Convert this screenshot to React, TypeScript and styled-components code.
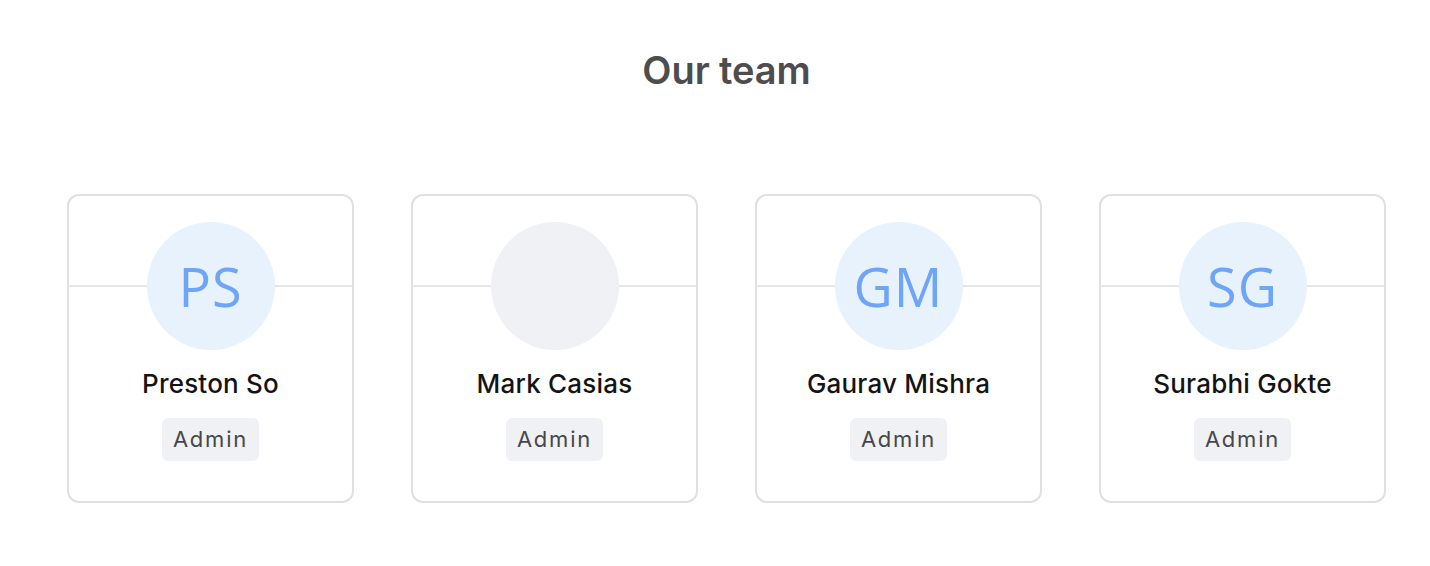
import React, { FC } from 'react';
import styled, { createGlobalStyle } from 'styled-components';

const GlobalStyle = createGlobalStyle`
    body {
        margin: 0;
        background: #ffffff;
        font-family: Inter, "Noto Sans", sans-serif;
    }
`;

const Section = styled.section`
    padding: 42px 44px 0 67px;
`;

const Title = styled.h2`
    margin: 0;
    text-align: center;
    font-size: 38px;
    line-height: 56px;
    font-weight: 600;
    color: #4d4d4d;
    letter-spacing: -0.1px;
`;

const TeamGrid = styled.ul`
    list-style: none;
    margin: 96px 0 0;
    padding: 0;
    display: grid;
    grid-template-columns: repeat(4, 1fr);
    gap: 57px;
`;

const Card = styled.li`
    border: 2px solid #e0e0e2;
    border-radius: 12px;
    padding: 26px 0 40px;
    display: flex;
    flex-direction: column;
    align-items: center;
`;

const AvatarRow = styled.div`
    align-self: stretch;
    display: flex;
    align-items: center;

    &::before,
    &::after {
        content: '';
        flex: 1;
        height: 2px;
        background: #e6e6ea;
    }
`;

const Avatar = styled.div<{ $empty?: boolean }>`
    width: 128px;
    height: 128px;
    border-radius: 50%;
    background: ${(p) => (p.$empty ? '#eff1f4' : '#e7f2fd')};
    color: #6ea5f6;
    display: flex;
    align-items: center;
    justify-content: center;
    font-family: "Open Sans", "Noto Sans", sans-serif;
    font-size: 54px;
    letter-spacing: 1px;
`;

const Name = styled.div`
    margin-top: 18px;
    font-size: 26px;
    line-height: 32px;
    font-weight: 500;
    color: #141414;
    letter-spacing: 0.2px;
`;

const Role = styled.span`
    margin-top: 18px;
    background: #f0f1f5;
    border-radius: 6px;
    padding: 0 11px;
    line-height: 43px;
    font-size: 22px;
    letter-spacing: 1.8px;
    color: #474747;
`;

interface IMember {
    name: string;
    initials?: string;
    role: string;
}

const members: IMember[] = [
    { name: 'Preston So', initials: 'PS', role: 'Admin' },
    { name: 'Mark Casias', role: 'Admin' },
    { name: 'Gaurav Mishra', initials: 'GM', role: 'Admin' },
    { name: 'Surabhi Gokte', initials: 'SG', role: 'Admin' },
];

const App: FC = () => {
    return (
        <>
            <GlobalStyle />
            <Section>
                <Title>Our team</Title>
                <TeamGrid>
                    {members.map((member) => (
                        <Card key={member.name}>
                            <AvatarRow>
                                <Avatar $empty={!member.initials}>{member.initials}</Avatar>
                            </AvatarRow>
                            <Name>{member.name}</Name>
                            <Role>{member.role}</Role>
                        </Card>
                    ))}
                </TeamGrid>
            </Section>
        </>
    );
};

export default App;
